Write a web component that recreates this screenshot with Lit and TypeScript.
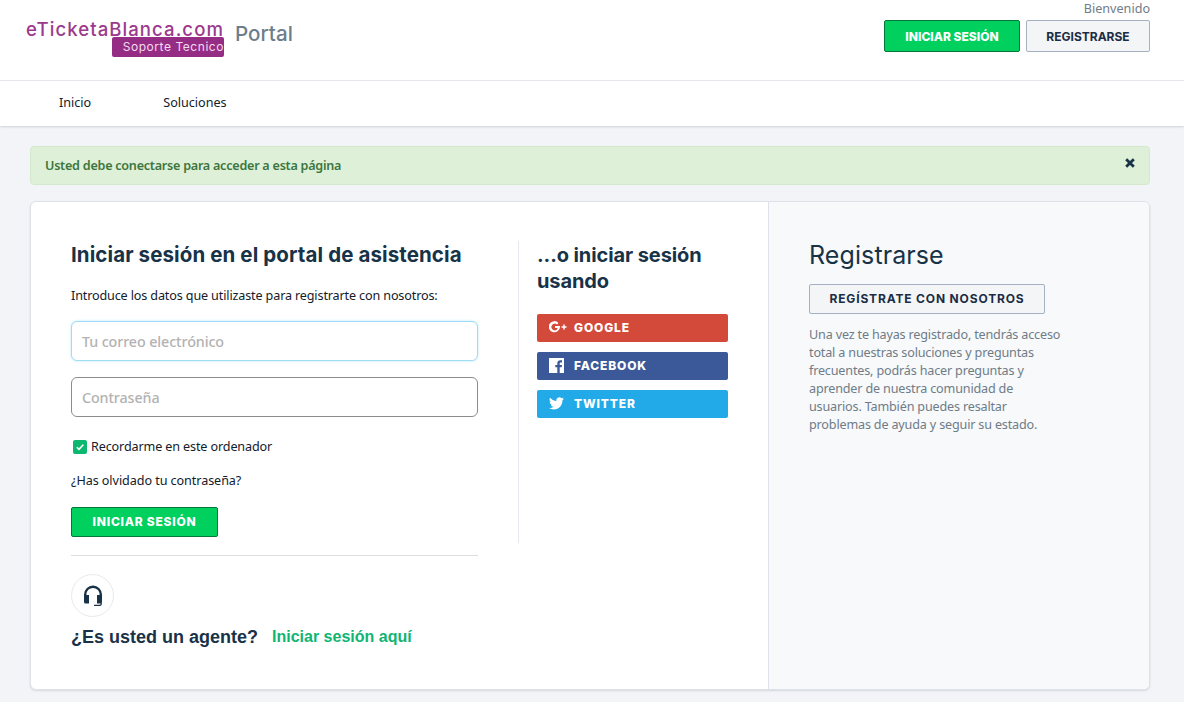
import { LitElement, html, css } from "lit";
import { customElement } from "lit/decorators.js";

@customElement("app-root")
export class AppRoot extends LitElement {
  static styles = css`
    :host { display: block; min-height: 702px; background: #f3f4f7; font-family: "Noto Sans", "Liberation Sans", sans-serif; color: #183247; font-size: 12.6px; overflow: hidden; }
    * { box-sizing: border-box; }
    .head { height: 81px; background: #fff; border-bottom: 1px solid #e6e9ee; display: flex; justify-content: space-between; padding: 0 34px 0 26px; }
    .brand { display: flex; align-items: flex-start; gap: 11px; padding-top: 17px; }
    .logo { display: flex; flex-direction: column; align-items: flex-end; width: 198px; }
    .logo-name { font-family: "Inter", sans-serif; font-size: 18.6px; font-weight: 500; line-height: 24px; height: 20px; color: #9b3a8d; letter-spacing: 1.05px; white-space: nowrap; }
    .logo-tag { width: 112px; height: 20px; background: #962d85; border-radius: 2px; color: #f2dcee; font-family: "Inter", sans-serif; font-size: 12px; line-height: 20px; text-align: right; letter-spacing: .55px; white-space: nowrap; }
    .portal { font-family: "Inter", sans-serif; font-weight: 500; font-size: 20.6px; line-height: 33px; color: #6c7d8c; }
    .actions { display: flex; flex-direction: column; align-items: flex-end; }
    .welcome { line-height: 17px; height: 20px; color: #6f7c87; }
    .btns { display: flex; gap: 6px; }
    .btn { display: flex; align-items: center; justify-content: center; height: 32px; border-radius: 2px; font-family: "Inter", sans-serif; font-weight: 700; font-size: 12px; white-space: nowrap; }
    .primary { background: #00d05e; border: 1px solid #04763a; color: #fff; font-weight: 800; }
    .secondary { background: #f3f5f7; border: 1px solid #a3b1c2; color: #1b2c45; }
    .w136 { width: 136px; }
    .w124 { width: 124px; }
    .nav { height: 45px; background: #fff; box-shadow: 0 1px 2px rgba(24,50,71,.16); display: flex; align-items: center; padding: 0 0 3px 59px; gap: 72px; color: #12202c; }
    .alert { margin: 20px 34px 0 30px; height: 39px; background: #dff0d8; border: 1px solid #d4e8cb; border-radius: 4px; display: flex; align-items: center; justify-content: space-between; padding: 0 13px 1px 14px; color: #3c763d; font-weight: 600; letter-spacing: -.25px; }
    .close { display: block; width: 12px; height: 12px; margin-top: -5px; }
    .card { margin: 16px 34px 0 30px; height: 489px; background: #fff; border: 1px solid #dde2e8; border-radius: 6px; box-shadow: 0 1px 2px rgba(24,50,71,.14); display: flex; overflow: hidden; }
    .main { width: 738px; padding: 39px 40px 0; border-right: 1px solid #dde2e8; display: flex; gap: 40px; }
    .login { width: 407px; flex: none; }
    h2 { margin: 0; padding-top: 1px; font-family: "Inter", sans-serif; font-weight: 700; font-size: 20px; line-height: 26px; color: #183247; }
    .login h2 { font-size: 20.5px; white-space: nowrap; letter-spacing: .1px; }
    .social h2 { letter-spacing: -.1px; }
    .intro { margin: 19px 0 0; line-height: 18px; color: #12202c; white-space: nowrap; letter-spacing: -.14px; }
    .field { height: 40px; border-radius: 6px; border: 1px solid #8c8c8c; display: flex; align-items: center; padding: 0 10px; color: #b2b2b2; font-size: 14.3px; font-weight: 500; background: #fff; letter-spacing: -.1px; }
    .focus { margin-top: 16px; border-color: #9fdcf5; box-shadow: 0 0 3px #bfe9fb; }
    .pw { margin-top: 16px; }
    .remember { display: flex; align-items: center; gap: 4px; margin: 20px 0 0 2px; height: 19px; color: #12202c; letter-spacing: -.13px; }
    .check { width: 14px; height: 14px; background: #0cb870; border-radius: 2px; display: block; }
    .forgot { margin-top: 15px; height: 19px; line-height: 19px; color: #12202c; letter-spacing: -.07px; }
    .login .btn { margin-top: 17px; width: 147px; height: 30px; font-size: 12px; letter-spacing: .75px; padding-bottom: 2px; }
    hr { margin: 18px 0 0; border: 0; border-top: 1px solid #dedede; }
    .agent-icon { margin-top: 18px; width: 43px; height: 43px; border-radius: 50%; border: 1px solid #e6e9ee; display: flex; align-items: center; justify-content: center; }
    .agent { margin-top: 8px; display: flex; gap: 14px; font-family: "Liberation Sans", sans-serif; font-weight: 700; font-size: 18px; line-height: 24px; white-space: nowrap; }
    .agent a { color: #10b573; font-size: 16px; }
    .social { width: 210px; flex: none; height: 302px; border-left: 1px solid #e6e9ee; padding-left: 18px; }
    .social h2 { width: 191px; }
    .social-list { margin-top: 20px; display: flex; flex-direction: column; gap: 10px; width: 191px; }
    .sbtn { height: 28px; padding-bottom: 2px; border-radius: 2px; color: #fff; display: flex; align-items: center; font-family: "Inter", sans-serif; font-weight: 800; font-size: 12px; letter-spacing: .85px; }
    .sicon { width: 37px; padding-left: 12px; flex: none; display: flex; align-items: center; }
    .sicon svg { display: block; }
    .g { background: #d44a3a; }
    .f { background: #3b5998; }
    .t { background: #22a9e7; }
    .reg { flex: 1; background: #f7f9fb; padding: 39px 40px; }
    .reg h2 { font-weight: 400; font-size: 25px; white-space: nowrap; letter-spacing: .1px; }
    .reg .btn { margin-top: 16px; width: 236px; height: 30px; font-weight: 700; font-size: 12px; letter-spacing: .85px; padding-bottom: 2px; }
    .reg p { margin: 12px 0 0; width: 256px; line-height: 18px; color: #6f7c87; letter-spacing: -.17px; }
  `;

  render() {
    return html`
      <div class="head">
        <div class="brand">
          <div class="logo">
            <div class="logo-name">eTicketaBlanca.com</div>
            <div class="logo-tag">Soporte Tecnico</div>
          </div>
          <div class="portal">Portal</div>
        </div>
        <div class="actions">
          <div class="welcome">Bienvenido</div>
          <div class="btns">
            <div class="btn primary w136">INICIAR SESIÓN</div>
            <div class="btn secondary w124">REGISTRARSE</div>
          </div>
        </div>
      </div>
      <div class="nav"><span>Inicio</span><span>Soluciones</span></div>
      <div class="alert">
        <span>Usted debe conectarse para acceder a esta página</span>
        <svg class="close" viewBox="0 0 12 12"><path d="M2.2 2.2 9.8 9.8M9.8 2.2 2.2 9.8" stroke="#183247" stroke-width="2.8" fill="none"/></svg>
      </div>
      <div class="card">
        <div class="main">
          <div class="login">
            <h2>Iniciar sesión en el portal de asistencia</h2>
            <p class="intro">Introduce los datos que utilizaste para registrarte con nosotros:</p>
            <div class="field focus">Tu correo electrónico</div>
            <div class="field pw">Contraseña</div>
            <div class="remember">
              <svg class="check" viewBox="0 0 14 14"><path d="M3.8 7.2 6 9.4l4.3-4.6" stroke="#fff" stroke-width="1.6" fill="none"/></svg>
              <span>Recordarme en este ordenador</span>
            </div>
            <div class="forgot">¿Has olvidado tu contraseña?</div>
            <div class="btn primary">INICIAR SESIÓN</div>
            <hr />
            <div class="agent-icon">
              <svg width="20" height="22" viewBox="0 0 20 22"><path d="M2.200 13V9.500a7.800 7.800 0 0 1 15.600 0V13" stroke="#183247" stroke-width="2.400" fill="none"/><path d="M1 11.500A1.500 1.500 0 0 1 2.500 10H6v8.500H2.500A1.500 1.500 0 0 1 1 17Z" fill="#183247"/><path d="M19 11.500A1.500 1.500 0 0 0 17.500 10H14v8.500h3.500A1.500 1.500 0 0 0 19 17Z" fill="#183247"/><path d="M18.200 18v1a1.300 1.300 0 0 1-1.300 1.300H11" stroke="#183247" stroke-width="1.300" fill="none"/></svg>
            </div>
            <div class="agent"><span>¿Es usted un agente?</span><a>Iniciar sesión aquí</a></div>
          </div>
          <div class="social">
            <h2>...o iniciar sesión usando</h2>
            <div class="social-list">
              <div class="sbtn g"><span class="sicon"><svg width="19" height="12" viewBox="0 0 19 12"><path d="M11 5H6v2h2.800A3.300 3.300 0 0 1 5.800 9.400 3.400 3.400 0 1 1 8 3.400l1.500-1.500A5.600 5.600 0 1 0 11 6Z" fill="#fff"/><path d="M15 3.500v5M12.500 6h5" stroke="#fff" stroke-width="1.500"/></svg></span>GOOGLE</div>
              <div class="sbtn f"><span class="sicon"><svg width="15" height="15" viewBox="0 0 15 15"><path d="M0 0h15v15h-4.300V9.200h2l.3-2.300h-2.300V5.500c0-.7.2-1.100 1.100-1.100H13V2.300c-.4 0-1-.1-1.700-.1-1.800 0-3 1.100-3 3.100v1.600h-2v2.300h2V15H0Z" fill="#fff"/></svg></span>FACEBOOK</div>
              <div class="sbtn t"><span class="sicon"><svg width="15" height="13" viewBox="0 0 24 20"><path d="M24 2.400a9.800 9.800 0 0 1-2.800.8A4.900 4.900 0 0 0 23.300.5a9.800 9.800 0 0 1-3.100 1.200 4.900 4.900 0 0 0-8.400 4.500A14 14 0 0 1 1.700.9a4.900 4.900 0 0 0 1.500 6.600 4.900 4.900 0 0 1-2.200-.6v.1a4.900 4.900 0 0 0 3.900 4.800 4.900 4.900 0 0 1-2.200.1 4.900 4.900 0 0 0 4.600 3.400A9.900 9.900 0 0 1 0 17.300 14 14 0 0 0 7.500 19.500c9.100 0 14-7.500 14-14v-.6A10 10 0 0 0 24 2.400Z" fill="#fff"/></svg></span>TWITTER</div>
            </div>
          </div>
        </div>
        <div class="reg">
          <h2>Registrarse</h2>
          <div class="btn secondary">REGÍSTRATE CON NOSOTROS</div>
          <p>Una vez te hayas registrado, tendrás acceso total a nuestras soluciones y preguntas frecuentes, podrás hacer preguntas y aprender de nuestra comunidad de usuarios. También puedes resaltar problemas de ayuda y seguir su estado.</p>
        </div>
      </div>
    `;
  }
}
